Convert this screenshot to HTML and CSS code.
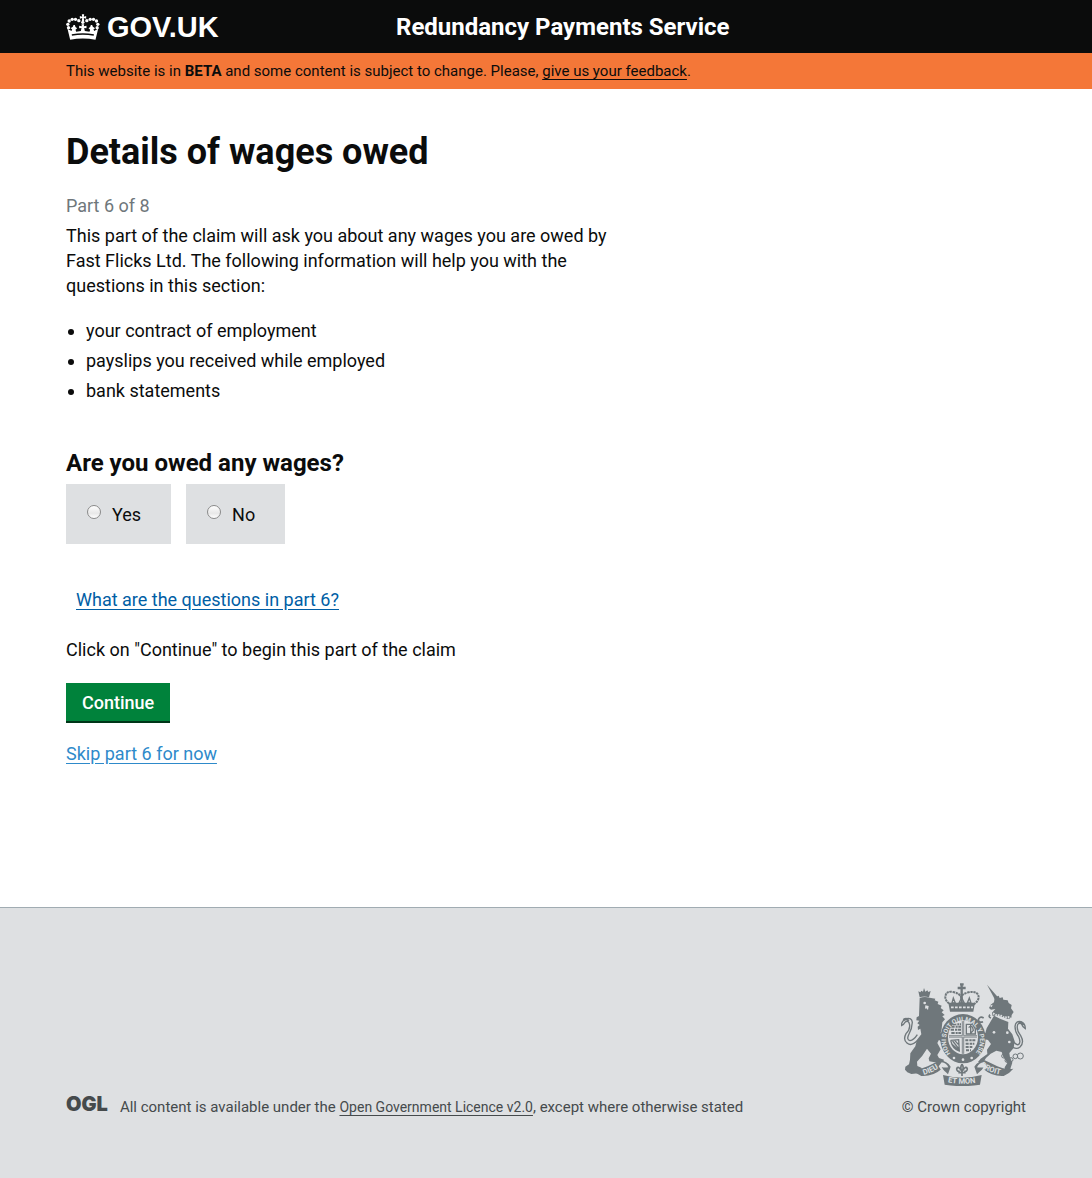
FILE: index.html
```html
<!DOCTYPE html>
<html lang="en">
<head>
<meta charset="utf-8">
<meta name="viewport" content="width=device-width, initial-scale=1">
<title>Details of wages owed - Redundancy Payments Service</title>
<link rel="stylesheet" href="styles.css">
</head>
<body>
<header class="header">
  <div class="wrapper header-inner">
    <a class="logo" href="#">
      <svg class="logo-crown" viewBox="20 38 101 78" aria-hidden="true">
        <g fill="#fff">
          <path d="M67 39h7l-1 7 7-2v8l-7-2 1 9h-7l1-9-7 2v-8l7 2z"/>
          <circle cx="70" cy="63" r="5"/>
          <circle cx="58" cy="58" r="5"/><circle cx="48" cy="54" r="5"/><circle cx="38" cy="54" r="5"/>
          <circle cx="29" cy="59" r="5"/><circle cx="25" cy="69" r="5"/><circle cx="27" cy="79" r="5"/>
          <circle cx="82" cy="58" r="5"/><circle cx="92" cy="54" r="5"/><circle cx="102" cy="54" r="5"/>
          <circle cx="111" cy="59" r="5"/><circle cx="115" cy="69" r="5"/><circle cx="113" cy="79" r="5"/>
          <path d="M24 82l12 7 2-5-5-3 7-5 2-5 4 0 2 6 5 4-5 4 2 6 14-2 2-9-7 1v-8l8 2-1-6h8l-1 6 8-2v8l-7-1 2 9 14 2 2-6-5-4 5-4 2-6h4l2 5 7 5-5 3 2 5 12-7-8 33q-38-7-76 0z"/>
        </g>
        <path d="M37 101q33-6 66 0" fill="none" stroke="#0b0c0c" stroke-width="4"/>
      </svg>
      <span>GOV.UK</span>
    </a>
    <a class="service-name" href="#">Redundancy Payments Service</a>
  </div>
</header>
<div class="beta">
  <p class="wrapper beta-text">This website is in <strong>BETA</strong> and some content is subject to change. Please, <a class="beta-link" href="#">give us your feedback</a>.</p>
</div>
<main class="wrapper main">
  <h1 class="title">Details of wages owed</h1>
  <p class="part">Part 6 of 8</p>
  <p class="intro">This part of the claim will ask you about any wages you are owed by Fast Flicks Ltd. The following information will help you with the questions in this section:</p>
  <ul class="list">
    <li>your contract of employment</li>
    <li>payslips you received while employed</li>
    <li>bank statements</li>
  </ul>
  <form>
    <fieldset class="question">
      <legend class="question-title">Are you owed any wages?</legend>
      <div class="choices">
        <label class="choice" for="owed-yes"><input class="radio" type="radio" id="owed-yes" name="owed" value="yes">Yes</label>
        <label class="choice" for="owed-no"><input class="radio" type="radio" id="owed-no" name="owed" value="no">No</label>
      </div>
    </fieldset>
    <p class="help"><a class="link" href="#">What are the questions in part 6?</a></p>
    <p class="begin">Click on "Continue" to begin this part of the claim</p>
    <button class="button" type="submit">Continue</button>
    <p class="skip"><a class="link link-light" href="#">Skip part 6 for now</a></p>
  </form>
</main>
<footer class="footer">
  <div class="wrapper footer-inner">
    <div class="licence">
      <span class="ogl">OGL</span>
      <p class="licence-text">All content is available under the <a class="licence-link" href="#">Open Government Licence v2.0</a>, except where otherwise stated</p>
    </div>
    <a class="copyright" href="#">
      <svg class="arms" viewBox="48 39 375 309" aria-hidden="true">
        <defs>
          <path id="garter" d="M197 250A51 57 0 1 1 271 250"/>
          <path id="dieu" d="M116 315Q146 307 176 284"/>
          <path id="etmon" d="M188 337Q232 346 280 337"/>
          <path id="droit" d="M286 287Q312 309 352 315"/>
        </defs>
        <g class="ink">
          <!-- lion -->
          <path d="M100 64l6 3 3-5 5 3 3-11 4 11 6-4 3 5 7-3-5 19q-14-5-28 0z"/>
          <path d="M104 84q14-6 30-1l17 3-2 5 11 4-2 7 12 5-3 7 9 7-6 6 9 8-7 4 8 9-8 9-2 20-3 12 9 14 8 5-3 8-12 1-7-8-5 10 10 19-10 17 5 9 15 5-3 7-17 2-24-4-2-9 7-14-12-15-14 21-16 18 1 13 12 5 3 13-12 4-21 2-12-5-7-8 1-9 11-7 3-14 1-19 15-21 5-20 13-16-3-17-7 4-1-10 6-5-7-5 6-8-9-1 1-9 7-4z"/>
          <!-- unicorn -->
          <path d="M306 44l29 33 4 8-10 2z"/>
          <path d="M329 82l12-5 3 7 9-2 2 7 13 2 3 8 9 6-2 10 8 11-6 9-1 10-10 2-28-10-19 0-1-9 10-11-13 2-6-5 5-10 10-7z"/>
          <path d="M327 137l18 9 25 10-1 20 13 17 7 21-3 20-13 15 2 13 7 16-5 15-2 12-14-1-2-12 8-13-12-18-5-15-16-4-17 9-14 13-8 13-16-1 8-10 20-14-1-13 12-17-9-12-13-3-6 11-9-5 6-14-10-10-9 3-4-8 11-8 13 10 13 3 4-14z"/>
          <!-- crown, garter and ribbon -->
          <path d="M190 98h80l-5 27h-70z"/>
          <ellipse cx="234" cy="206" rx="68" ry="74"/>
          <path d="M80 296q28 3 48-7t38-18q20 2 31 19l-8 23q-13-13-20-15-25 22-60 20-17-7-29-22z"/>
          <path d="M385 296q-28 3-48-7t-38-18q-20 2-31 19l8 23q13-13 20-15 25 22 60 20 17-7 29-22z"/>
          <path d="M174 315q58 16 116 0l-5 29q-53 9-106 0z"/>
        </g>
        <g class="paper">
          <ellipse cx="234" cy="202" rx="45" ry="51"/>
          <circle cx="119" cy="99" r="4"/><path d="M121 106l10 2-2 12-5-5-4 1z"/>
          <path d="M170 277q14 1 20 15-11 2-20-1l8 13-10-4-7-11z"/>
          <path d="M296 277q-14 1-20 15 11 2 20-1l-8 13 10-4 7-11z"/>
          <path d="M314 107l9-3-3 8z"/>
          <circle cx="207" cy="264" r="4"/><circle cx="234" cy="269" r="4"/><circle cx="260" cy="264" r="4"/>
          <circle cx="327" cy="187" r="4"/><circle cx="367" cy="188" r="4"/><circle cx="373" cy="216" r="4"/>
        </g>
        <g class="line">
          <path d="M324 130l11 6 11 0 12 7 11-2 11 6" stroke="#dee0e2" stroke-width="6" stroke-dasharray="5 3"/>
          <path d="M98 211q-19 19-31 9-14-10-4-29 16-17 9-33-5-8-12-1-3 7-11 10 1-15 15-21 16-4 18 11-1 20-10 35-9 17 3 20 11-1 22-18" stroke-width="4"/>
          <path d="M55 150q12-7 15 3M402 160q10-6 13 6" stroke-width="7"/>
          <path d="M374 223q17 19 31 8 14-13 2-34-14-17-9-33 5-9 12-1 3 9 11 13 0-16-13-21-16-3-18 14 0 17 11 31 8 18-1 24-9 2-20-18" stroke-width="4"/>
          <path d="M200 106q-20-12-19-26 2-18 23-14 20 4 24 15 3-9 22-14 29-5 31 14 0 14-20 25" stroke-width="6" stroke-dasharray="7 2"/>
          <path d="M230 40v62M218 54h24M225 43h11" stroke-width="7"/>
          <path d="M201 99l4-15 6 15zM247 99l6-15 5 15zM222 99l8-16 8 16z" stroke-width="4"/>
          <path d="M198 112h66" stroke="#dee0e2" stroke-width="5" stroke-dasharray="8 4"/>
          <path d="M234 153v98M192 199h84" stroke-width="7"/>
          <path d="M234 153v98M192 199h84" stroke="#dee0e2" stroke-width="2"/>
          <path d="M199 170h29M197 179h32M199 189h29M204 163h24" stroke-width="6" stroke-dasharray="10 3 6 2"/>
          <path d="M241 211h30M242 221h26M242 231h22M243 241h15" stroke-width="6" stroke-dasharray="9 3 7 2"/>
          <path d="M244 163h19l8 14v15h-27zM257 164v27M251 173q8-9 12 0l2 8-8 9" stroke-width="4"/>
          <path d="M197 211l24-2 2 34q-20-5-26-32M203 213l18 23M209 211l11 12M201 223l20 17" stroke-width="4"/>
          <path d="M231 283q-7 8 0 22 7-14 0-22M231 304q-12-20-16-7 1 9 9 6M231 304q12-20 16-7-1 9-9 6M220 308h22M231 302v16" stroke-width="5"/>
          <path d="M294 155q-12 5-14-6 5-12 16-5M318 144q-9-3-3-10" stroke-width="5"/>
          <circle cx="356" cy="258" r="6"/><circle cx="366" cy="271" r="6"/><circle cx="378" cy="269" r="6"/><circle cx="391" cy="259" r="7"/><circle cx="406" cy="258" r="9"/>
        </g>
        <g class="motto">
          <text class="motto-ring"><textPath href="#garter">HONI SOIT QUI MAL Y PENSE</textPath></text>
          <text><textPath href="#dieu">DIEU</textPath></text>
          <text><textPath href="#etmon">ET MON</textPath></text>
          <text><textPath href="#droit">DROIT</textPath></text>
        </g>
      </svg>
      <span>© Crown copyright</span>
    </a>
  </div>
</footer>
</body>
</html>
```
FILE: styles.css
```css
* {
  box-sizing: border-box;
}

body {
  margin: 0;
  background: #fff;
  color: #0b0c0c;
  font-family: Roboto, "Liberation Sans", sans-serif;
  font-size: 18px;
  line-height: 25px;
}

p, h1, ul, fieldset {
  margin: 0;
  padding: 0;
}

.wrapper {
  max-width: 1020px;
  margin: 0 auto;
  padding: 0 30px;
}

.header {
  background: #0b0c0c;
}

.header-inner {
  display: grid;
  grid-template-columns: 330px 1fr;
  align-items: center;
  min-height: 53px;
}

.logo {
  display: flex;
  align-items: center;
  gap: 7px;
  color: #fff;
  font-family: "Liberation Sans", Arial, sans-serif;
  font-size: 29px;
  font-weight: 700;
  line-height: 32px;
  text-decoration: none;
}

.logo-crown {
  width: 34px;
  height: 26px;
}

.service-name {
  color: #fff;
  font-size: 24px;
  font-weight: 700;
  line-height: 30px;
  text-decoration: none;
}

.beta {
  background: #f47738;
}

.beta-text {
  padding-top: 8px;
  padding-bottom: 8px;
  font-size: 15px;
  line-height: 20px;
}

.beta-link {
  color: inherit;
  text-underline-offset: 3px;
}

.main {
  padding-top: 43px;
  padding-bottom: 141px;
}

.title {
  font-size: 36px;
  font-weight: 700;
  line-height: 40px;
}

.part {
  margin-top: 21px;
  color: #6f777b;
}

.intro {
  max-width: 560px;
  margin-top: 5px;
}

.list {
  margin-top: 18px;
  padding-left: 20px;
  line-height: 30px;
}

.question {
  margin-top: 42px;
  border: 0;
}

.question-title {
  padding: 0;
  font-size: 24px;
  font-weight: 700;
  line-height: 30px;
}

.choices {
  display: flex;
  gap: 15px;
  margin-top: 6px;
}

.choice {
  display: flex;
  align-items: center;
  gap: 11px;
  min-height: 60px;
  padding: 0 30px 0 21px;
  background: #dee0e2;
}

.radio {
  appearance: none;
  width: 14px;
  height: 14px;
  margin: 0 0 4px;
  border: 1px solid #8a8a8a;
  border-radius: 50%;
  background: linear-gradient(#fff, #e8e8e8 60%, #fff);
}

.radio:checked {
  background: radial-gradient(#0b0c0c 30%, #fff 40%);
}

.help {
  margin-top: 43px;
  padding-left: 10px;
}

.link {
  color: #005ea5;
  text-underline-offset: 3px;
}

.link-light {
  color: #2e8aca;
}

.begin {
  margin-top: 25px;
}

.button {
  display: block;
  margin-top: 21px;
  padding: 7px 16px 6px;
  border: 0;
  background: #00823b;
  box-shadow: 0 2px 0 #003618;
  color: #fff;
  font: inherit;
  font-weight: 500;
}

.skip {
  margin-top: 20px;
}

.footer {
  border-top: 1px solid #a1acb2;
  background: #dee0e2;
  color: #454a4c;
  font-size: 15px;
  line-height: 20px;
}

.footer-inner {
  display: flex;
  align-items: flex-end;
  justify-content: space-between;
  padding-top: 75px;
  padding-bottom: 61px;
}

.licence {
  display: flex;
  align-items: flex-end;
  gap: 12px;
}

.ogl {
  padding-bottom: 3px;
  font-family: Inter, sans-serif;
  font-size: 20px;
  font-weight: 900;
}

.licence-link {
  color: inherit;
  font-size: 14px;
  text-underline-offset: 3px;
}

.copyright {
  display: flex;
  flex-direction: column;
  align-items: flex-end;
  gap: 11px;
  color: inherit;
  text-decoration: none;
}

.arms {
  width: 125px;
  height: 103px;
}

.ink {
  fill: #6f777b;
}

.paper {
  fill: #dee0e2;
}

.line {
  fill: none;
  stroke: #6f777b;
  stroke-width: 3px;
}

.motto {
  fill: #dee0e2;
  font-size: 23px;
  font-weight: 700;
}

.motto-ring {
  font-size: 19px;
}
```
